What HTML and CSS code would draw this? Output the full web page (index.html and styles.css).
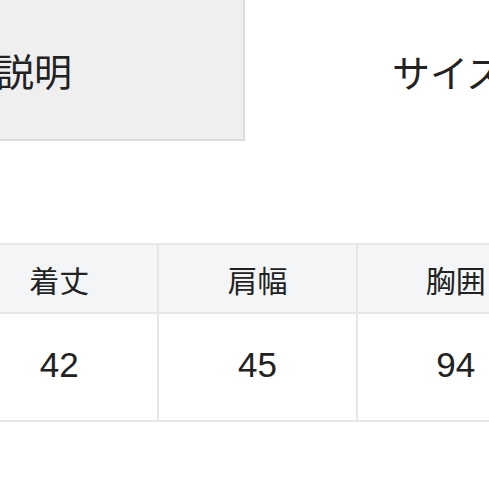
FILE: index.html
```html
<!DOCTYPE html>
<html lang="ja">
<head>
<meta charset="utf-8">
<link rel="stylesheet" href="styles.css">
</head>
<body>
<div class="page">
  <div class="tabs">
    <div class="tab tab-active">商品説明</div>
    <div class="tab tab-size">サイズ</div>
  </div>
  <table class="size-table">
    <thead>
      <tr><th>着丈</th><th>肩幅</th><th>胸囲</th></tr>
    </thead>
    <tbody>
      <tr><td>42</td><td>45</td><td>94</td></tr>
    </tbody>
  </table>
</div>
</body>
</html>
```
FILE: styles.css
```css
html, body {
  margin: 0;
  padding: 0;
  background: #ffffff;
  overflow: hidden;
}
body {
  width: 489px;
  height: 489px;
  font-family: "Liberation Sans", "Noto Sans CJK JP", sans-serif;
  color: #222222;
}
.page {
  width: 1200px;
}
.tabs {
  display: flex;
  margin-left: -251px;
  height: 141px;
}
.tab {
  box-sizing: border-box;
  width: 496px;
  height: 141px;
  display: flex;
  align-items: center;
  font-size: 38px;
  font-family: "Noto Sans CJK JP", sans-serif;
}
.tab-active {
  justify-content: center;
  background: #efefef;
  border-right: 2px solid #dcdcdc;
  border-bottom: 2px solid #dcdcdc;
}
.tab-size {
  padding-left: 147px;
  background: #ffffff;
}
.size-table {
  margin-top: 102px;
  margin-left: -41px;
  border-collapse: collapse;
  table-layout: fixed;
  width: 597px;
}
.size-table th,
.size-table td {
  border: 2px solid #e6e6e6;
  text-align: center;
  padding: 0;
}
.size-table th {
  height: 67px;
  background: #f3f5f6;
  font-weight: normal;
  font-size: 30px;
}
.size-table td {
  height: 102px;
  font-size: 35px;
  padding-bottom: 4px;
}
```
